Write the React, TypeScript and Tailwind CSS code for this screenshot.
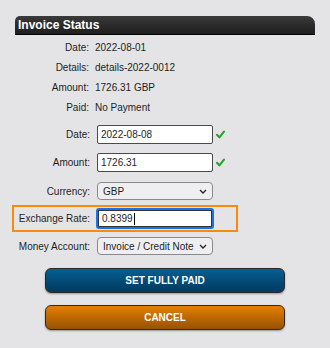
import React from "react";

const Check = () => (
  <svg width="9" height="9" viewBox="0 0 9 9" className="ml-[3px] shrink-0">
    <path d="M1 4.8 L3.4 7.4 L8 1.6" fill="none" stroke="#1fa51f" strokeWidth="2" strokeLinecap="round" strokeLinejoin="round" />
  </svg>
);

const Chevron = () => (
  <svg width="8" height="5" viewBox="0 0 8 5" className="absolute right-[5px] top-[6px]">
    <path d="M1 1 L4 4 L7 1" fill="none" stroke="#222" strokeWidth="1.3" />
  </svg>
);

const Info = ({ label, value }: { label: string; value: string }) => (
  <div className="flex h-[20px] items-center">
    <div className="w-[89px] text-right">{label}</div>
    <div className="ml-[6px]">{value}</div>
  </div>
);

const Label = ({ children }: { children: React.ReactNode }) => (
  <div className="w-[97px] shrink-0 whitespace-nowrap pr-[7px] text-right">{children}</div>
);

const TextInput = ({ value }: { value: string }) => (
  <div className="flex h-[19px] w-[116px] shrink-0 items-center rounded-[2px] border border-[#4a4a4a] bg-white pl-[3px]">
    {value}
  </div>
);

const Select = ({ value }: { value: string }) => (
  <div className="relative flex h-[18px] w-[116px] shrink-0 items-center whitespace-nowrap rounded-[4px] border border-[#8a8a8e] bg-[#efeff1] pl-[5px]">
    {value}
    <Chevron />
  </div>
);

export default function App() {
  return (
    <div
      className="h-[348px] w-[330px] bg-[#e4e4e6] pt-[16px] text-[10px] text-[#1e1e1e]"
      style={{ fontFamily: '"Liberation Sans", Arial, sans-serif' }}
    >
      <div className="ml-[15px] flex h-[19px] w-[300px] items-center rounded-tl-[5px] rounded-tr-[8px] border-b border-black bg-gradient-to-b from-[#3a3a3a] to-[#1e1e1e] pl-[3px] text-[12px] font-bold text-white">
        Invoice Status
      </div>
      <div className="pt-[2px]">
        <Info label="Date:" value="2022-08-01" />
        <Info label="Details:" value="details-2022-0012" />
        <Info label="Amount:" value="1726.31 GBP" />
        <Info label="Paid:" value="No Payment" />
      </div>
      <div className="mt-[8px] flex h-[19px] items-center">
        <Label>Date:</Label>
        <TextInput value="2022-08-08" />
        <Check />
      </div>
      <div className="mt-[9px] flex h-[19px] items-center">
        <Label>Amount:</Label>
        <TextInput value="1726.31" />
        <Check />
      </div>
      <div className="mt-[10px] flex h-[18px] items-center">
        <Label>Currency:</Label>
        <Select value="GBP" />
      </div>
      <div className="ml-[12px] mt-[5px] flex h-[27px] w-[226px] items-center border-2 border-[#f98a0c]">
        <div className="w-[82px] shrink-0 whitespace-nowrap pr-[6px] text-right">Exchange Rate:</div>
        <div className="flex h-[21px] w-[118px] shrink-0 items-center rounded-[3px] border-2 border-[#1672f3] bg-white">
          <div className="flex h-full w-full items-center border border-[#333] pl-[3px]">
            0.8399
            <span className="ml-[1px] inline-block h-[12px] w-px bg-black" />
          </div>
        </div>
      </div>
      <div className="mt-[5px] flex h-[18px] items-center">
        <Label>Money Account:</Label>
        <Select value="Invoice / Credit Note" />
      </div>
      <div className="ml-[45px] mt-[13px] flex h-[25px] w-[240px] items-center justify-center rounded-[6px] border border-[#2a2a2a] bg-gradient-to-b from-[#065f93] to-[#003a5e] font-bold text-white shadow-[0_1px_2px_rgba(0,0,0,0.35)]">
        SET FULLY PAID
      </div>
      <div className="ml-[45px] mt-[12px] flex h-[25px] w-[240px] items-center justify-center rounded-[6px] border border-[#2a2a2a] bg-gradient-to-b from-[#e57f04] to-[#975200] font-bold text-white shadow-[0_1px_2px_rgba(0,0,0,0.35)]">
        CANCEL
      </div>
    </div>
  );
}
